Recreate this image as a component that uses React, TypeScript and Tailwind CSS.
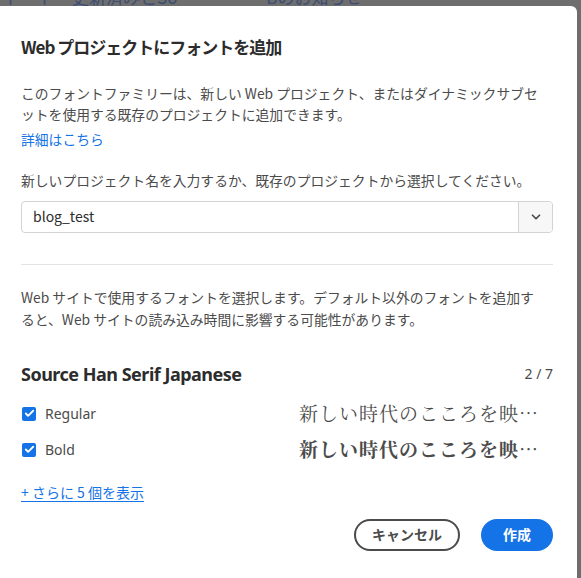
import { Check, ChevronDown } from "lucide-react";

const fontRows = [
  { label: "Regular", weight: "font-normal" },
  { label: "Bold", weight: "font-bold" },
];

const sans = "font-['Noto_Sans_CJK_JP','Noto_Sans',sans-serif]";

export default function App() {
  return (
    <div className="relative w-[581px] h-[578px] overflow-hidden bg-[#6e6e6e]">
      {/* blurred page text behind the overlay */}
      <div className="h-[6px] overflow-hidden pl-[4px]">
        <div className={`-mt-[12px] text-[17px] leading-[18px] text-[#3b4d73] ${sans}`}>
          トート　更新済みとSo　　 　　　Bのお知らせ
        </div>
      </div>

      <div className="flex h-[572px]">
        {/* Modal */}
        <div className={`w-[577px] h-full bg-white rounded-tr-[6px] px-[21px] pt-[29px] ${sans}`}>
          <h2 className="text-[17px] leading-[24px] font-bold tracking-[-1px] text-[#2c2c2c]">
            Web プロジェクトにフォントを追加
          </h2>

          <p className="mt-[24px] text-[13.8px] leading-[21px] text-[#4b4b4b] whitespace-nowrap">
            このフォントファミリーは、新しい Web プロジェクト、またはダイナミックサブセ
            <br />
            ットを使用する既存のプロジェクトに追加できます。
          </p>
          <a className="block mt-[4px] text-[13.8px] leading-[21px] text-[#1473e6]">詳細はこちら</a>

          <p className="mt-[20px] text-[13.8px] leading-[21px] text-[#4b4b4b] whitespace-nowrap">
            新しいプロジェクト名を入力するか、既存のプロジェクトから選択してください。
          </p>

          <div className="mt-[9.5px] flex h-[32px] w-[532px] rounded-[4px] border border-[#d3d3d3] overflow-hidden">
            <div className="flex-1 flex items-center pl-[11px] text-[14px] text-[#2c2c2c]">blog_test</div>
            <div className="w-[34px] flex items-center justify-center bg-[#f7f7f7] border-l border-[#d3d3d3]">
              <ChevronDown className="w-[14px] h-[14px] text-[#4b4b4b]" strokeWidth={3} />
            </div>
          </div>

          <div className="mt-[31px] h-px w-[532px] bg-[#e3e3e3]" />

          <p className="mt-[21px] text-[13.8px] leading-[22px] text-[#4b4b4b] whitespace-nowrap">
            Web サイトで使用するフォントを選択します。デフォルト以外のフォントを追加す
            <br />
            ると、Web サイトの読み込み時間に影響する可能性があります。
          </p>

          <div className="mt-[32px] flex items-center justify-between w-[532px]">
            <h3 className="text-[18px] leading-[24px] font-bold tracking-[-0.5px] text-[#2c2c2c] font-['Noto_Sans',sans-serif]">
              Source Han Serif Japanese
            </h3>
            <span className="text-[14px] text-[#4b4b4b] font-['Noto_Sans',sans-serif]">2 / 7</span>
          </div>

          <div className="mt-[10px]">
            {fontRows.map((row) => (
              <div key={row.label} className="flex items-center h-[36px]">
                <div className="w-[14px] h-[14px] ml-[1px] rounded-[2px] bg-[#1473e6] flex items-center justify-center">
                  <Check className="w-[11px] h-[11px] text-white" strokeWidth={4} />
                </div>
                <span className="ml-[9px] w-[254px] text-[14px] text-[#4b4b4b] font-['Noto_Sans',sans-serif]">
                  {row.label}
                </span>
                <span
                  className={`text-[19px] tracking-[1px] text-[#4b4b4b] whitespace-nowrap ${row.weight} font-['Noto_Serif_CJK_JP','Noto_Serif_JP','Noto_Sans_CJK_JP',serif]`}
                >
                  新しい時代のこころを映…
                </span>
              </div>
            ))}
          </div>

          <a className="block mt-[14px] text-[14px] leading-[20px] text-[#1473e6] underline underline-offset-[3px] whitespace-pre">
            + さらに 5 個を表示
          </a>

          <div className="mt-[17px] flex justify-end gap-[21px] w-[532px]">
            <button className="h-[32px] w-[106px] rounded-full border-2 border-[#4b4b4b] text-[14px] font-bold text-[#4b4b4b]">
              キャンセル
            </button>
            <button className="h-[32px] w-[72px] rounded-full bg-[#1473e6] text-[14px] font-bold text-white">
              作成
            </button>
          </div>
        </div>
        <div className="flex-1" />
      </div>
    </div>
  );
}
